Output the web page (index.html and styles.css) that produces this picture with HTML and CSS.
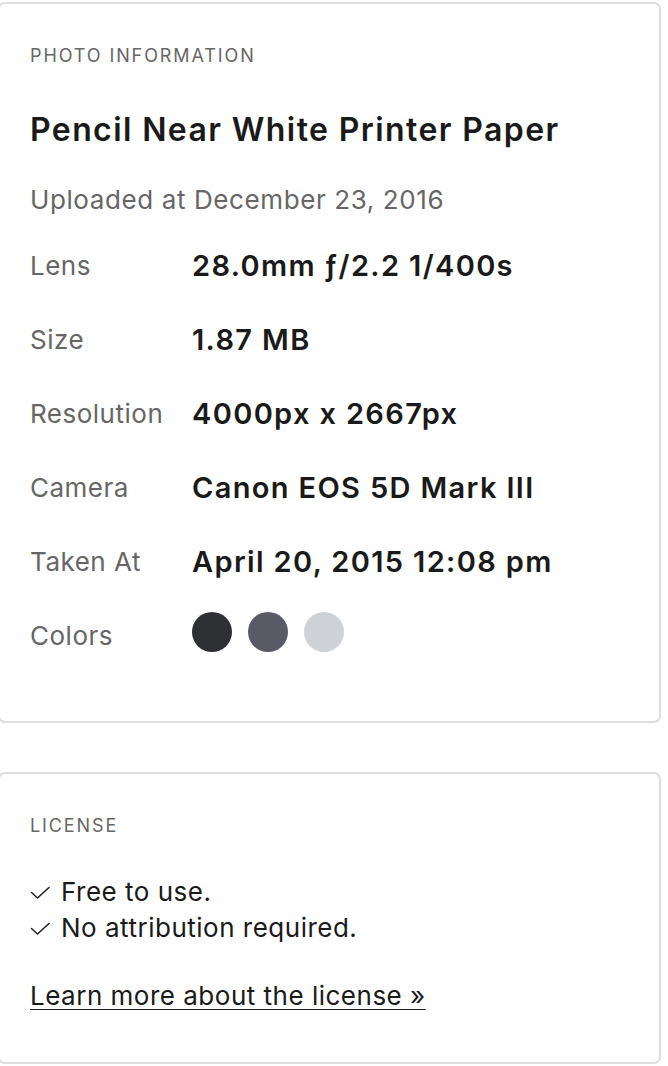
FILE: index.html
```html
<!DOCTYPE html>
<html>
<head>
<meta charset="utf-8">
<link rel="stylesheet" href="styles.css">
</head>
<body>
<div class="wrap">
  <section class="card info">
    <h3 class="eyebrow">PHOTO INFORMATION</h3>
    <h1 class="title">Pencil Near White Printer Paper</h1>
    <p class="uploaded">Uploaded at December 23, 2016</p>
    <dl class="meta">
      <dt>Lens</dt><dd>28.0mm ƒ/2.2 1/400s</dd>
      <dt>Size</dt><dd>1.87 MB</dd>
      <dt>Resolution</dt><dd>4000px x 2667px</dd>
      <dt>Camera</dt><dd>Canon EOS 5D Mark III</dd>
      <dt>Taken At</dt><dd>April 20, 2015 12:08 pm</dd>
      <dt>Colors</dt>
      <dd class="swatches">
        <span class="swatch" style="background:#2f3033"></span>
        <span class="swatch" style="background:#595a66"></span>
        <span class="swatch" style="background:#cfd3d7"></span>
      </dd>
    </dl>
  </section>
  <section class="card license">
    <h3 class="eyebrow">LICENSE</h3>
    <ul class="checks">
      <li><svg class="tick" width="20" height="14" viewBox="0 0 20 14"><path d="M1.5 6.5 L7.5 12 L19 1.5" fill="none" stroke="#222" stroke-width="1.6" stroke-linecap="round" stroke-linejoin="round"/></svg>Free to use.</li>
      <li><svg class="tick" width="20" height="14" viewBox="0 0 20 14"><path d="M1.5 6.5 L7.5 12 L19 1.5" fill="none" stroke="#222" stroke-width="1.6" stroke-linecap="round" stroke-linejoin="round"/></svg>No attribution required.</li>
    </ul>
    <a class="more" href="#">Learn more about the license »</a>
  </section>
</div>
</body>
</html>
```
FILE: styles.css
```css
* { box-sizing: border-box; }
html, body { margin: 0; padding: 0; background: #fff; }
body {
  font-family: Inter, "Noto Sans", "Liberation Sans", sans-serif;
  color: #1d1d1f;
}
.wrap {
  margin: 2px 7px 0 -2px;
  display: flex;
  flex-direction: column;
  gap: 49px;
}
.card {
  border: 2px solid #dedede;
  border-radius: 7px;
  padding: 0 30px 0 30px;
}
.info { height: 721px; padding-top: 38px; }
.license { height: 292px; padding-top: 38px; }
.eyebrow {
  margin: 0;
  font-size: 18px;
  font-weight: 400;
  letter-spacing: 1.9px;
  line-height: 28px;
  color: #666;
}
.title {
  margin: 40px 0 0;
  font-size: 32px;
  font-weight: 600;
  line-height: 40px;
  color: #1a1a1a;
  letter-spacing: 1.4px;
}
.uploaded {
  margin: 32px 0 0;
  font-size: 26px;
  line-height: 36px;
  color: #666;
  font-weight: 400;
  letter-spacing: 0.6px;
}
.meta {
  margin: 29px 0 0;
  display: grid;
  grid-template-columns: 162px 1fr;
  grid-auto-rows: 38px;
  row-gap: 36px;
  align-items: center;
}
.meta dt {
  font-size: 26px;
  color: #666;
  line-height: 38px;
  letter-spacing: 0.5px;
}
.meta dd {
  margin: 0;
  font-size: 29px;
  font-weight: 600;
  line-height: 38px;
  color: #1a1a1a;
  letter-spacing: 1.35px;
}
.swatches {
  display: flex;
  gap: 16px;
  align-self: start;
  margin-top: -5px !important;
}
.swatch {
  width: 40px;
  height: 40px;
  border-radius: 50%;
  display: block;
}
.checks {
  list-style: none;
  margin: 34px 0 0;
  padding: 0;
}
.checks li {
  display: flex;
  align-items: center;
  gap: 11px;
  height: 36px;
  font-size: 26px;
  line-height: 36px;
  color: #1a1a1a;
  letter-spacing: 0.5px;
}
.tick { display: block; flex: none; margin-top: 2px; }
.more {
  display: inline-block;
  margin-top: 32px;
  font-size: 26px;
  line-height: 36px;
  color: #1a1a1a;
  letter-spacing: 0.5px;
  text-decoration: underline;
  text-underline-offset: 4px;
  text-decoration-thickness: 1px;
}
```
